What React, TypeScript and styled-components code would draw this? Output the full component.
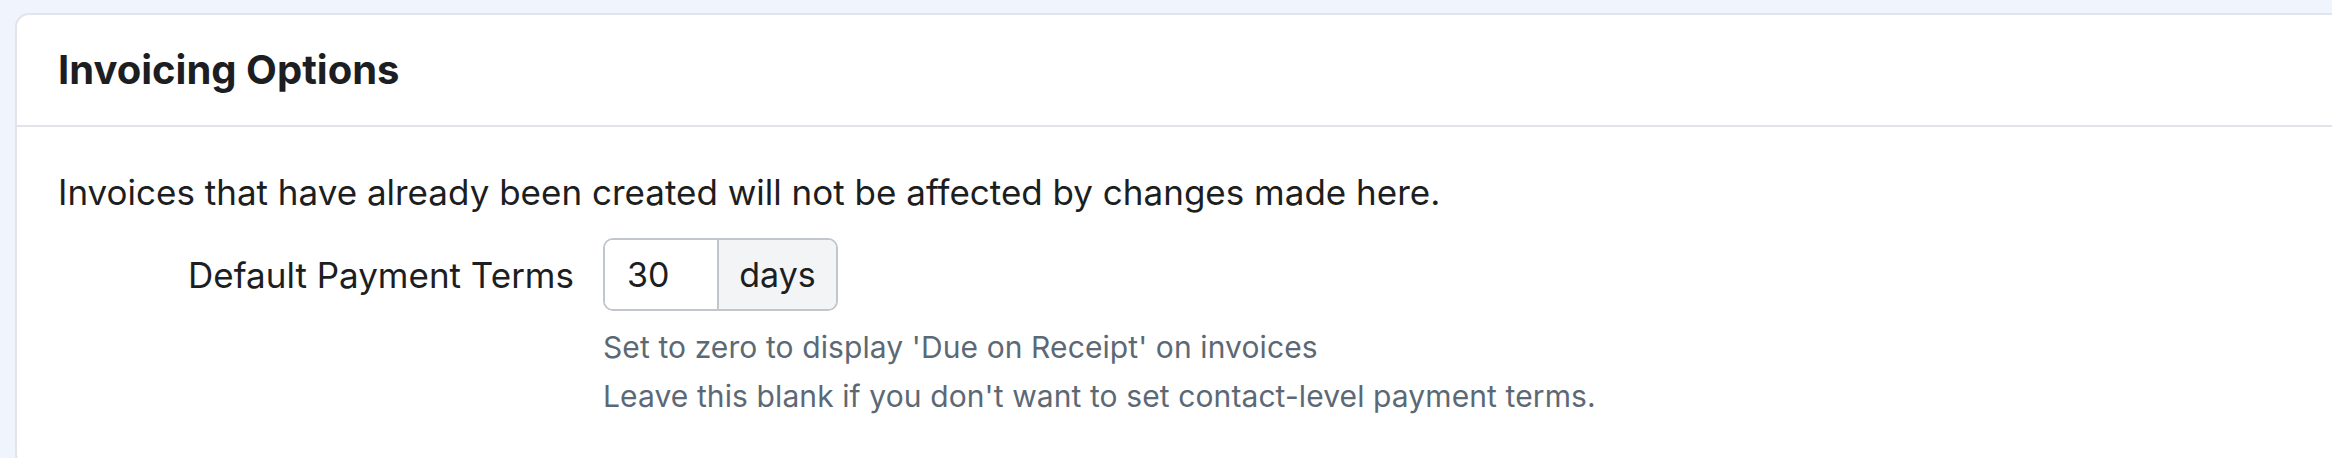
import React from "react";
import styled, { createGlobalStyle } from "styled-components";

const Global = createGlobalStyle`
  html, body {
    margin: 0;
    padding: 0;
    background: #f0f4fc;
    overflow: hidden;
  }
  body {
    font-family: Inter, "Noto Sans", sans-serif;
    color: #1c1e21;
  }
`;

const Page = styled.div`
  padding: 13px 0 0 15px;
`;

const Card = styled.section`
  background: #ffffff;
  border: 2px solid #e3e4ea;
  border-radius: 14px;
  margin-right: -40px;
`;

const CardHeader = styled.header`
  height: 110px;
  display: flex;
  align-items: center;
  padding: 0 41px;
  border-bottom: 2px solid #e3e4ea;
`;

const Title = styled.h2`
  margin: 0;
  font-size: 40px;
  line-height: 48px;
  font-weight: 700;
  letter-spacing: 0;
`;

const CardBody = styled.div`
  padding: 39px 41px 48px;
`;

const Notice = styled.p`
  margin: 0 0 20px;
  font-size: 35px;
  line-height: 52px;
`;

const FieldGrid = styled.div`
  display: grid;
  grid-template-columns: 516px auto;
  column-gap: 29px;
  align-items: center;
`;

const Label = styled.label`
  justify-self: end;
  font-size: 35px;
  line-height: 52px;
`;

const InputGroup = styled.div`
  display: flex;
  width: 235px;
  height: 73px;
  box-sizing: border-box;
  border: 2px solid #c1c5cc;
  border-radius: 10px;
  overflow: hidden;
`;

const NumberInput = styled.input`
  width: 114px;
  box-sizing: border-box;
  border: none;
  border-right: 2px solid #c1c5cc;
  padding: 0 0 0 22px;
  font-family: inherit;
  font-size: 34px;
  color: #1c1e21;
  outline: none;
  background: #fff;
`;

const Addon = styled.span`
  flex: 1;
  display: flex;
  align-items: center;
  justify-content: center;
  background: #f3f4f6;
  font-size: 34px;
`;

const HelpBlock = styled.div`
  grid-column: 2;
  margin-top: 14px;
  display: flex;
  flex-direction: column;
  gap: 5px;
`;

const Help = styled.p`
  margin: 0;
  font-size: 30px;
  line-height: 44px;
  letter-spacing: 0.1px;
  color: #5c6975;
`;

export default function App() {
  return (
    <>
      <Global />
      <Page>
        <Card>
          <CardHeader>
            <Title>Invoicing Options</Title>
          </CardHeader>
          <CardBody>
            <Notice>
              Invoices that have already been created will not be affected by changes made here.
            </Notice>
            <FieldGrid>
              <Label htmlFor="terms">Default Payment Terms</Label>
              <InputGroup>
                <NumberInput id="terms" defaultValue="30" />
                <Addon>days</Addon>
              </InputGroup>
              <HelpBlock>
                <Help>Set to zero to display 'Due on Receipt' on invoices</Help>
                <Help>Leave this blank if you don't want to set contact-level payment terms.</Help>
              </HelpBlock>
            </FieldGrid>
          </CardBody>
        </Card>
      </Page>
    </>
  );
}
